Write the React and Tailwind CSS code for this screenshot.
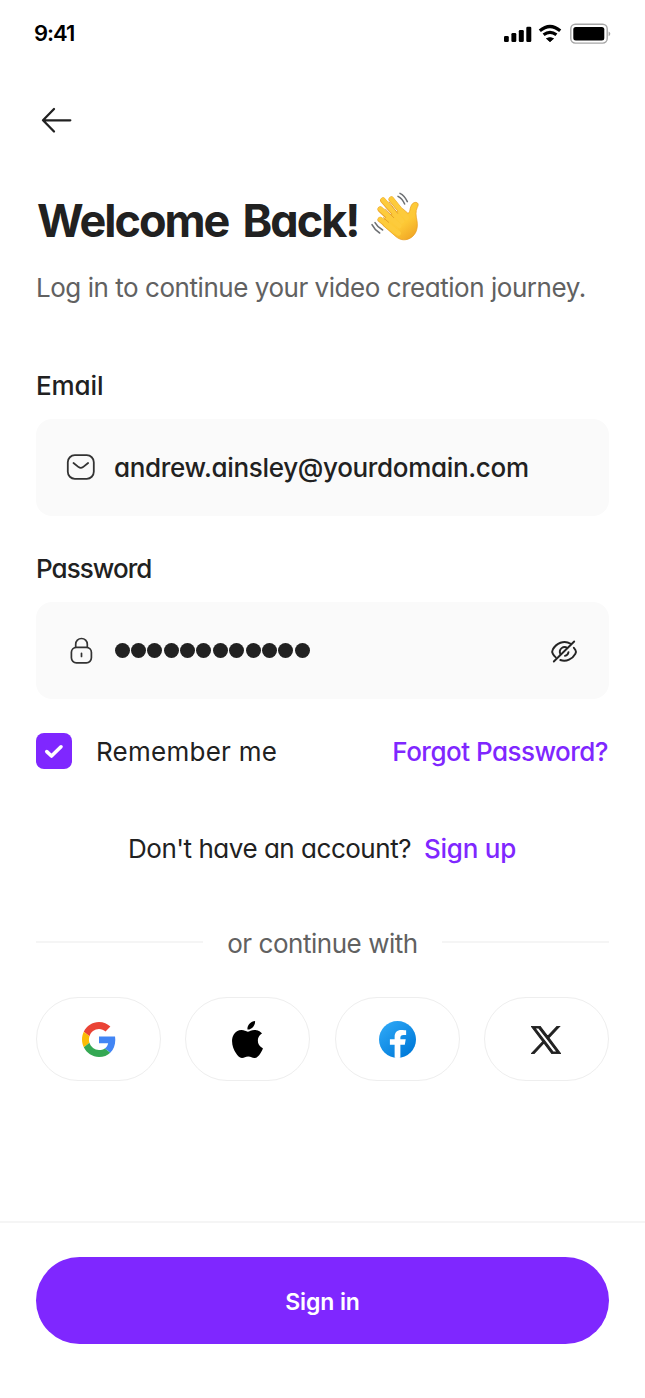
import React from "react";

const base = "whitespace-nowrap leading-none";

function WavingHand() {
  return (
    <svg className="h-[52px] w-[50px]" viewBox="30 30 150 156" fill="none" strokeLinecap="round" strokeLinejoin="round">
      <defs>
        <linearGradient id="skin" x1="60" y1="50" x2="165" y2="180" gradientUnits="userSpaceOnUse">
          <stop offset="0" stopColor="#fdd043" />
          <stop offset="0.65" stopColor="#fdc835" />
          <stop offset="1" stopColor="#eea022" />
        </linearGradient>
      </defs>
      <g stroke="#eba529" strokeWidth="17">
        <path d="M61 119 108 157" />
        <path d="M61 88 112 137" />
        <path d="M69 61 120 120" />
        <path d="M94 58 135 109" />
      </g>
      <path d="M76 112 128 86 143 99C149 100 149 92 151 84 154 72 160 67 168 67 176 69 176 75 172 82 166 94 168 108 171 122 175 145 168 163 153 173 137 183 121 181 108 170L70 137Z" fill="url(#skin)" stroke="#e79a1d" strokeWidth="2" />
      <g stroke="#fdcb3c" strokeWidth="14">
        <path d="M61 118 116 160" />
        <path d="M61 87 118 137" />
        <path d="M69 60 126 124" />
        <path d="M94 57 140 114" />
      </g>
      <g stroke="#e5a02a" strokeWidth="3">
        <path d="M70 113 86 127" />
        <path d="M76 87 101 113" />
        <path d="M87 66 113 100" />
      </g>
      <g stroke="#6d7073" strokeWidth="4.6">
        <path d="M120 40C129 44 137 54 142 65" />
        <path d="M114 49C122 53 130 63 134 72" />
        <path d="M45 128C50 137 58 145 68 150" />
        <path d="M36 134C41 144 49 153 59 159" />
      </g>
    </svg>
  );
}

function StatusIcons() {
  return (
    <svg className="mt-[2px] h-[22px] w-[108px]" viewBox="503 23 108 22" fill="none">
      <g fill="#000">
        <rect x="504" y="36" width="4.8" height="6" rx="1.3" />
        <rect x="511.4" y="33" width="4.9" height="9" rx="1.3" />
        <rect x="518.8" y="30" width="5" height="12" rx="1.3" />
        <rect x="526.3" y="26.8" width="5" height="15.2" rx="1.3" />
        <path d="M546.4 38.6Q550 36.6 553.6 38.6L550 41.8Z" stroke="#000" strokeWidth="0.8" strokeLinejoin="round" />
      </g>
      <path d="M539.8 30.8Q550 22.2 560.2 30.8M543.6 34.8Q550 29.8 556.4 34.8" stroke="#000" strokeWidth="3.2" />
      <rect x="570.8" y="24.3" width="36.4" height="18.8" rx="4.5" stroke="#a6a6a6" strokeWidth="1.4" />
      <rect x="573.3" y="27" width="31" height="13.4" rx="2.5" fill="#000" />
      <path d="M608.6 31.4Q610.3 32.2 610.3 33.8T608.6 36.2Z" fill="#a6a6a6" />
    </svg>
  );
}

function ArrowLeft() {
  return (
    <svg className="h-[30px] w-[34px]" viewBox="39 105 34 30" fill="none" stroke="#212121" strokeWidth="2.3" strokeLinecap="round" strokeLinejoin="round">
      <path d="M70.3 120.3H43M54 109 43 120.3 54 131.5" />
    </svg>
  );
}

function MailIcon() {
  return (
    <svg className="h-[30px] w-[30px]" viewBox="66 453 30 30" fill="none" stroke="#333" strokeWidth="1.8" strokeLinecap="round" strokeLinejoin="round">
      <rect x="67.8" y="455.2" width="26" height="23.6" rx="7" />
      <path d="M73.5 463 78.6 467.1Q80.8 468.7 83 467.1L88.1 463" />
    </svg>
  );
}

function LockIcon() {
  return (
    <svg className="h-[30px] w-[30px]" viewBox="66 635.5 30 30" fill="none" stroke="#333" strokeWidth="1.7" strokeLinecap="round">
      <rect x="71.4" y="646.8" width="20" height="15.5" rx="5" />
      <path d="M75.7 646.5V643.8A5.8 5.8 0 0 1 87.3 643.8V646.5M81.5 652.8V656" />
    </svg>
  );
}

function EyeOffIcon() {
  return (
    <svg className="h-[28px] w-[30px]" viewBox="549 636.5 30 28" fill="none" stroke="#252525" strokeWidth="1.9" strokeLinecap="round" strokeLinejoin="round">
      <path d="M574.2 641 553.8 661" />
      <path d="M570.7 643.2C563.8 639.2 556.2 642.7 552.8 649 552 650.4 552 651.8 552.8 653.2 553.5 654.5 554.5 655.7 555.8 656.9" />
      <path d="M573.8 647.2 575.4 649.5C576.2 650.8 576.1 652 575.4 653.2 572.5 658.4 566.4 661.8 560.3 659.5" />
      <path d="M567.3 647.5C563.6 644.6 558.1 648.7 560.4 653.6M568.5 651.6C568.2 653.5 566.8 655 564.9 655.4" />
    </svg>
  );
}

function GoogleLogo() {
  return (
    <svg className="h-[35px] w-[34px]" viewBox="0 0 48 48" preserveAspectRatio="none">
      <path fill="#EA4335" d="M24 9.5c3.54 0 6.71 1.22 9.21 3.6l6.85-6.85C35.9 2.38 30.47 0 24 0 14.62 0 6.51 5.38 2.56 13.22l7.98 6.19C12.43 13.72 17.74 9.5 24 9.5z" />
      <path fill="#4285F4" d="M46.98 24.55c0-1.57-.15-3.09-.38-4.55H24v9.02h12.94c-.58 2.96-2.26 5.48-4.78 7.18l7.73 6c4.51-4.18 7.09-10.36 7.09-17.65z" />
      <path fill="#FBBC05" d="M10.53 28.59c-.48-1.45-.76-2.99-.76-4.59s.27-3.14.76-4.59l-7.98-6.19C.92 16.46 0 20.12 0 24c0 3.88.92 7.54 2.56 10.78l7.97-6.19z" />
      <path fill="#34A853" d="M24 48c6.48 0 11.93-2.13 15.89-5.81l-7.73-6c-2.15 1.45-4.92 2.3-8.16 2.3-6.26 0-11.57-4.22-13.47-9.91l-7.98 6.19C6.51 42.62 14.62 48 24 48z" />
    </svg>
  );
}

function AppleLogo() {
  return (
    <svg className="h-[37px] w-[31px]" viewBox="2.2 0 19.6 24" preserveAspectRatio="none">
      <path d="M12.152 6.896c-.948 0-2.415-1.078-3.96-1.04-2.04.027-3.91 1.183-4.961 3.014-2.117 3.675-.546 9.103 1.519 12.09 1.013 1.454 2.208 3.09 3.792 3.039 1.52-.065 2.09-.987 3.935-.987 1.831 0 2.35.987 3.96.948 1.637-.026 2.676-1.48 3.676-2.948 1.156-1.688 1.636-3.325 1.662-3.415-.039-.013-3.182-1.221-3.22-4.857-.026-3.04 2.48-4.494 2.597-4.559-1.429-2.09-3.623-2.324-4.39-2.376-2-.156-3.675 1.09-4.61 1.09zM15.53 3.83c.843-1.012 1.4-2.427 1.245-3.83-1.207.052-2.662.805-3.532 1.818-.78.896-1.454 2.338-1.273 3.714 1.338.104 2.715-.688 3.559-1.701" />
    </svg>
  );
}

function FacebookLogo() {
  return (
    <svg className="h-[37px] w-[37px]" viewBox="0 0 36 36">
      <defs>
        <linearGradient id="fb" x1="6" y1="4" x2="30" y2="32" gradientUnits="userSpaceOnUse">
          <stop stopColor="#2AA4F4" />
          <stop offset="1" stopColor="#007AD9" />
        </linearGradient>
      </defs>
      <circle cx="18" cy="18" r="18" fill="url(#fb)" />
      <path fill="#fff" d="M15.2 35.8V23.1H10.6V17.8H15.2V15.4C15.2 11.1 17.6 8.7 21.7 8.7 23.5 8.7 26.4 9 26.4 9V13.6H23.8C21.5 13.6 20.8 14.9 20.8 16.4V17.8H26L25.1 23.1H20.8V35.8Q18 36.2 15.2 35.8Z" />
    </svg>
  );
}

function XLogo() {
  return (
    <svg className="h-[28px] w-[30px]" viewBox="-15 -15 1230 1257" preserveAspectRatio="none" fill="#212121" stroke="#212121" strokeWidth="45">
      <path d="M714.163 519.284L1160.89 0H1055.03L667.137 450.887L357.328 0H0L468.492 681.821L0 1226.37H105.866L515.491 750.218L842.672 1226.37H1200L714.137 519.284H714.163ZM569.165 687.828L521.697 619.934L144.011 79.6944H306.615L611.412 515.685L658.88 583.579L1055.08 1150.3H892.476L569.165 687.854V687.828Z" />
    </svg>
  );
}

function Social({ children, label }) {
  return (
    <button aria-label={label} className="flex h-[84px] w-[125px] items-center justify-center rounded-[42px] border-[1.5px] border-[#eeeeee] pt-px">
      {children}
    </button>
  );
}

export default function App() {
  return (
    <div className="flex h-[1398px] w-[645px] flex-col bg-white font-['Inter','Liberation_Sans',sans-serif] text-[#212121] [font-feature-settings:'cv11','ss03']">
      <header className="flex h-[66px] items-center justify-between pr-[34px] pl-[34px]">
        <span className={`${base} text-[22px] font-semibold tracking-[-1px] text-black`}>9:41</span>
        <StatusIcons />
      </header>

      <main className="flex flex-col px-9">
        <button aria-label="Back" className="mt-[39px] ml-[3px] w-fit">
          <ArrowLeft />
        </button>

        <div className="mt-[55px] flex h-[60px] items-center">
          <h1 className={`${base} w-[334px] pl-px text-[45px] font-bold tracking-[-2px] [word-spacing:5.5px]`}>Welcome Back!</h1>
          <div className="-mt-[8px]">
            <WavingHand />
          </div>
        </div>
        <p className={`${base} mt-[25px] text-[26px] tracking-[-0.46px] text-[#616161]`}>
          Log in to continue your video creation journey.
        </p>

        <label className={`${base} mt-[72px] text-[26px] font-medium tracking-[-0.1px]`}>Email</label>
        <div className="mt-[20px] flex h-[97px] items-center gap-[18px] rounded-2xl bg-[#fafafa] pl-[30px]">
          <MailIcon />
          <span className={`${base} text-[26px] font-medium tracking-[-0.32px]`}>andrew.ainsley@yourdomain.com</span>
        </div>

        <label className={`${base} mt-[40px] text-[26px] font-medium tracking-[-0.95px]`}>Password</label>
        <div className="mt-[20px] flex h-[97px] items-center rounded-2xl bg-[#fafafa] pr-[30px] pl-[30px]">
          <LockIcon />
          <div className="ml-[18.5px] flex flex-1 gap-[1.4px]">
            {Array.from({ length: 12 }, (_, i) => (
              <span key={i} className="size-[15px] rounded-full bg-[#212121]" />
            ))}
          </div>
          <EyeOffIcon />
        </div>

        <div className="mt-[34px] flex h-9 items-center">
          <span className="flex size-9 items-center justify-center rounded-lg bg-[#7f27ff]">
            <svg className="h-[18px] w-[20px]" viewBox="0 0 20 18" fill="none" stroke="#fff" strokeWidth="3.6" strokeLinecap="round" strokeLinejoin="round">
              <path d="M2.8 9.6 7.5 14 17 4.8" />
            </svg>
          </span>
          <span className={`${base} ml-6 pt-[2px] text-[26px] tracking-[0.25px]`}>Remember me</span>
          <a className={`${base} ml-auto pt-[2px] pr-px text-[26px] font-medium tracking-[-0.52px] text-[#7f27ff]`}>Forgot Password?</a>
        </div>

        <div className="mt-[67px] flex justify-between pr-[93px] pl-[92px]">
          <span className={`${base} text-[26px] tracking-[-0.48px]`}>Don't have an account?</span>
          <a className={`${base} text-[26px] font-medium tracking-[-0.25px] text-[#7f27ff]`}>Sign up</a>
        </div>

        <div className="mt-[69px] flex h-[26px] items-center justify-between">
          <span className="-mt-[5px] h-[2px] w-[167px] bg-[#f5f5f5]" />
          <span className={`${base} text-[26px] tracking-[-0.46px] text-[#616161]`}>or continue with</span>
          <span className="-mt-[5px] h-[2px] w-[167px] bg-[#f5f5f5]" />
        </div>

        <div className="mt-[40px] flex justify-between">
          <Social label="Google"><GoogleLogo /></Social>
          <Social label="Apple"><AppleLogo /></Social>
          <Social label="Facebook"><FacebookLogo /></Social>
          <Social label="X"><XLogo /></Social>
        </div>
      </main>

      <footer className="mt-auto h-[177px] border-t-2 border-[#f5f5f5] px-9 pt-[34px]">
        <button className={`${base} flex h-[87px] w-full items-center justify-center rounded-full bg-[#7f27ff] pt-[3px] text-[23px] font-semibold tracking-[-0.1px] text-white`}>
          Sign in
        </button>
      </footer>
    </div>
  );
}
